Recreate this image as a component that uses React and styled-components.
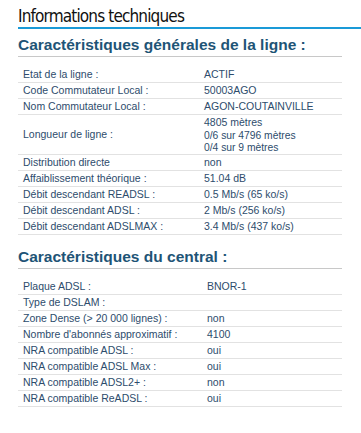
import styled, { createGlobalStyle } from "styled-components";

const general = [
  { label: "Etat de la ligne :", value: "ACTIF" },
  { label: "Code Commutateur Local :", value: "50003AGO" },
  { label: "Nom Commutateur Local :", value: "AGON-COUTAINVILLE" },
  {
    label: "Longueur de ligne :",
    value: "4805 mètres",
    details: ["0/6 sur 4796 mètres", "0/4 sur 9 mètres"],
  },
  { label: "Distribution directe", value: "non" },
  { label: "Affaiblissement théorique :", value: "51.04 dB" },
  { label: "Débit descendant READSL :", value: "0.5 Mb/s (65 ko/s)" },
  { label: "Débit descendant ADSL :", value: "2 Mb/s (256 ko/s)" },
  { label: "Débit descendant ADSLMAX :", value: "3.4 Mb/s (437 ko/s)" },
];

const central = [
  { label: "Plaque ADSL :", value: "BNOR-1" },
  { label: "Type de DSLAM :", value: "" },
  { label: "Zone Dense (> 20 000 lignes) :", value: "non" },
  { label: "Nombre d'abonnés approximatif :", value: "4100" },
  { label: "NRA compatible ADSL :", value: "oui" },
  { label: "NRA compatible ADSL Max :", value: "oui" },
  { label: "NRA compatible ADSL2+ :", value: "non" },
  { label: "NRA compatible ReADSL :", value: "oui" },
];

function InfoTable({ rows, labelWidth }) {
  return (
    <Table $labelWidth={labelWidth}>
      {rows.map((row) => (
        <Row key={row.label}>
          <Label>{row.label}</Label>
          <Value>
            {row.value}
            {row.details &&
              row.details.map((d) => <Detail key={d}>{d}</Detail>)}
          </Value>
        </Row>
      ))}
    </Table>
  );
}

export default function App() {
  return (
    <Page>
      <GlobalStyle />
      <Title>Informations techniques</Title>
      <Section>
        <Heading>Caractéristiques générales de la ligne :</Heading>
        <InfoTable rows={general} labelWidth={186} />
      </Section>
      <Section>
        <Heading>Caractéristiques du central :</Heading>
        <InfoTable rows={central} labelWidth={189} />
      </Section>
    </Page>
  );
}

const GlobalStyle = createGlobalStyle`
  html, body {
    margin: 0;
    padding: 0;
    background: #fff;
  }
`;

const Page = styled.div`
  padding: 5px 0 0 18px;
  font-family: "Liberation Sans", Arial, sans-serif;
`;

const Title = styled.h1`
  margin: 0 0 7px;
  font-family: "DejaVu Sans Condensed", "DejaVu Sans", sans-serif;
  font-stretch: condensed;
  font-weight: normal;
  font-size: 17px;
  letter-spacing: -0.85px;
  line-height: 22px;
  color: #111;
  border-bottom: 2px solid #1a9ad7;
`;

const Section = styled.section`
  width: 324px;

  & + & {
    margin-top: 13px;
  }
`;

const Heading = styled.h2`
  margin: 0 0 10px;
  padding-bottom: 2px;
  font-size: 15.5px;
  line-height: 18px;
  font-weight: bold;
  color: #1e5476;
  border-bottom: 1px solid #c8c8c8;
`;

const Table = styled.div`
  display: grid;
  grid-template-columns: ${(p) => p.$labelWidth}px 1fr;
`;

const Row = styled.div`
  display: contents;

  & > div {
    border-bottom: 1px solid #e2e2e2;
  }
`;

const Label = styled.div`
  display: flex;
  align-items: center;
  padding-left: 5px;
  font-size: 10.5px;
  line-height: 15px;
  color: #2d4c6c;
`;

const Value = styled.div`
  font-size: 10.5px;
  line-height: 15px;
  color: #2d4c6c;
  min-height: 15px;
`;

const Detail = styled.div`
  font-size: 10.3px;
  line-height: 12px;
`;
